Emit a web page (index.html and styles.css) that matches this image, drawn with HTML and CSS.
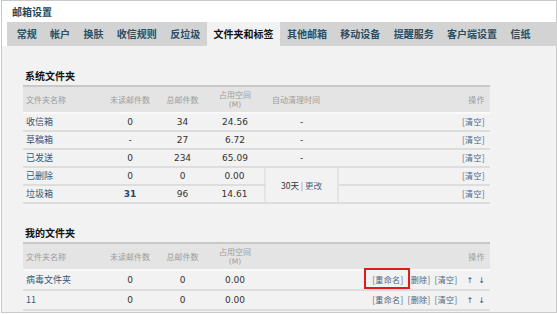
FILE: index.html
```html
<!DOCTYPE html>
<html lang="zh-CN">
<head>
  <meta charset="utf-8">
  <title>邮箱设置</title>
  <link rel="stylesheet" href="styles.css">
</head>
<body>
  <div class="page">
    <div class="title">邮箱设置</div>
    <ul class="tabs">
      <li>常规</li>
      <li>帐户</li>
      <li>换肤</li>
      <li>收信规则</li>
      <li>反垃圾</li>
      <li class="active">文件夹和标签</li>
      <li>其他邮箱</li>
      <li>移动设备</li>
      <li>提醒服务</li>
      <li>客户端设置</li>
      <li>信纸</li>
    </ul>
    <div class="content">
      <h3 class="section-title">系统文件夹</h3>
      <table class="folders">
        <colgroup>
          <col class="col-name">
          <col class="col-unread">
          <col class="col-total">
          <col class="col-space">
          <col class="col-auto">
          <col class="col-ops">
        </colgroup>
        <thead>
          <tr>
            <th class="name">文件夹名称</th>
            <th>未读邮件数</th>
            <th>总邮件数</th>
            <th><span class="line">占用空间</span><span class="line unit">(M)</span></th>
            <th class="auto">自动清理时间</th>
            <th class="ops">操作</th>
          </tr>
        </thead>
        <tbody>
          <tr>
            <td class="name"><a href="#">收信箱</a></td>
            <td>0</td>
            <td>34</td>
            <td>24.56</td>
            <td>-</td>
            <td class="ops"><a href="#">[清空]</a></td>
          </tr>
          <tr>
            <td class="name"><a href="#">草稿箱</a></td>
            <td>-</td>
            <td>27</td>
            <td>6.72</td>
            <td>-</td>
            <td class="ops"><a href="#">[清空]</a></td>
          </tr>
          <tr>
            <td class="name"><a href="#">已发送</a></td>
            <td>0</td>
            <td>234</td>
            <td>65.09</td>
            <td>-</td>
            <td class="ops"><a href="#">[清空]</a></td>
          </tr>
          <tr>
            <td class="name"><a href="#">已删除</a></td>
            <td>0</td>
            <td>0</td>
            <td>0.00</td>
            <td class="clean" rowspan="2">30天 <span class="sep">|</span> <a href="#">更改</a></td>
            <td class="ops"><a href="#">[清空]</a></td>
          </tr>
          <tr>
            <td class="name"><a href="#">垃圾箱</a></td>
            <td class="unread"><a href="#">31</a></td>
            <td>96</td>
            <td>14.61</td>
            <td class="ops"><a href="#">[清空]</a></td>
          </tr>
        </tbody>
      </table>

      <h3 class="section-title second">我的文件夹</h3>
      <table class="folders mine">
        <colgroup>
          <col class="col-name">
          <col class="col-unread">
          <col class="col-total">
          <col class="col-space">
          <col class="col-auto">
          <col class="col-ops">
        </colgroup>
        <thead>
          <tr>
            <th class="name">文件夹名称</th>
            <th>未读邮件数</th>
            <th>总邮件数</th>
            <th><span class="line">占用空间</span><span class="line unit">(M)</span></th>
            <th class="ops" colspan="2">操作</th>
          </tr>
        </thead>
        <tbody>
          <tr>
            <td class="name"><a href="#">病毒文件夹</a></td>
            <td>0</td>
            <td>0</td>
            <td>0.00</td>
            <td class="ops" colspan="2"><a class="marked" href="#">[重命名]</a><a href="#">[删除]</a><a href="#">[清空]</a><span class="arrows"><a href="#">↑</a><a href="#">↓</a></span></td>
          </tr>
          <tr>
            <td class="name"><a href="#">11</a></td>
            <td>0</td>
            <td>0</td>
            <td>0.00</td>
            <td class="ops" colspan="2"><a href="#">[重命名]</a><a href="#">[删除]</a><a href="#">[清空]</a><span class="arrows"><a href="#">↑</a><a href="#">↓</a></span></td>
          </tr>
        </tbody>
      </table>
    </div>
  </div>
</body>
</html>
```

FILE: styles.css
```css
*, *::before, *::after {
  margin: 0;
  padding: 0;
  box-sizing: border-box;
}

body {
  background-color: #FFFFFF;
  color: #333333;
  font-size: 9px;
  font-family: "DejaVu Sans", "Noto Sans CJK SC", sans-serif;
}

a {
  color: #4A6782;
  text-decoration: none;
}

.page {
  width: 556px;
  height: 313px;
  margin-left: 1px;
  border: 1px solid #C9C9C9;
  display: flex;
  flex-direction: column;
}

.title {
  height: 21px;
  padding-left: 10px;
  color: #24465C;
  font-size: 10px;
  font-weight: bold;
  font-family: "Noto Sans CJK SC", sans-serif;
  line-height: 21px;
}

.tabs {
  display: flex;
  height: 24px;
  margin-left: 5px;
  margin-right: -2px;
  padding-left: 3px;
  background-color: #D3D3D3;
  list-style: none;
}

.tabs li {
  padding: 0 6.7px;
  color: #2B4E63;
  font-size: 10px;
  font-weight: bold;
  font-family: "Noto Sans CJK SC", sans-serif;
  line-height: 24px;
}

.tabs li.active {
  background-color: #F2F2F2;
  color: #111111;
}

.content {
  flex: 1;
  padding: 24px 0 0 21px;
  background-color: #F2F2F2;
}

.section-title {
  margin-bottom: 3px;
  padding-left: 2px;
  color: #111111;
  font-size: 10px;
  font-weight: bold;
  font-family: "Noto Sans CJK SC", sans-serif;
  line-height: 12px;
}

.section-title.second {
  margin-top: 23px;
}

.folders {
  width: 467px;
  border-collapse: collapse;
  border-top: 2px solid #C8C8C8;
  table-layout: fixed;
}

.col-name { width: 77px; }
.col-unread { width: 60px; }
.col-total { width: 45px; }
.col-space { width: 60px; }
.col-auto { width: 73px; }
.col-ops { width: 152px; }

.folders th {
  height: 27px;
  background-color: #E4E4E4;
  border-bottom: 2px solid #FAFAFA;
  color: #9C9C9C;
  font-weight: normal;
  font-family: "Noto Sans CJK SC", sans-serif;
  font-size: 8px;
  line-height: 10px;
  text-align: center;
}

.folders th .line {
  display: block;
  line-height: 10px;
}

.folders th .unit {
  font-family: "DejaVu Sans", sans-serif;
  font-size: 7.5px;
}

.folders td {
  height: 18px;
  border-bottom: 2px solid #DDDDDD;
  text-align: center;
  line-height: 12px;
}

.folders .name {
  padding-left: 3px;
  text-align: left;
}

.folders td.name a {
  color: #335877;
  font-family: "Noto Sans CJK SC", sans-serif;
}

.folders th.auto {
  padding-left: 7px;
  text-align: left;
}

.folders .ops {
  padding-right: 5px;
  text-align: right;
  font-family: "Noto Sans CJK SC", sans-serif;
  font-size: 8px;
  letter-spacing: 0.4px;
}

.folders .clean {
  border-left: 2px solid #E4E4E4;
  border-right: 2px solid #E4E4E4;
  font-family: "Noto Sans CJK SC", sans-serif;
  font-size: 8.5px;
}

.clean .sep {
  color: #9A6BB0;
}

.unread a {
  color: #234B6E;
  font-weight: bold;
}

.mine td {
  height: 20px;
}

.ops a + a {
  margin-left: 4px;
}

.arrows {
  margin-left: 9px;
  letter-spacing: 0;
}

.arrows a {
  color: #34556F;
  font-family: "DejaVu Sans", sans-serif;
}

.arrows a + a {
  margin-left: 5px;
}

.marked {
  position: relative;
}

.marked::after {
  content: "";
  position: absolute;
  left: -8px;
  right: -6px;
  top: -6px;
  bottom: -4px;
  border: 2px solid #E11B1B;
}
```
